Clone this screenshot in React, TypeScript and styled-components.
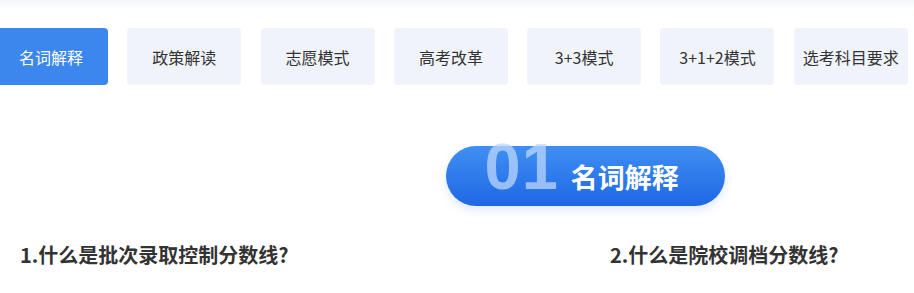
import styled, { createGlobalStyle } from "styled-components";

const GlobalStyle = createGlobalStyle`
  html, body {
    margin: 0;
    padding: 0;
    background: #fff;
    overflow: hidden;
  }
  body {
    font-family: "Microsoft YaHei", "Noto Sans CJK SC", "Liberation Sans", sans-serif;
    color: #333;
  }
`;

const Page = styled.div`
  width: 1200px;
  position: relative;
`;

const TopShade = styled.div`
  height: 10px;
  background: linear-gradient(180deg, #f3f6fa 0%, #ffffff 100%);
`;

const TabBar = styled.ul`
  list-style: none;
  margin: 18px 0 0 -6px;
  padding: 0;
  display: flex;
  gap: 19.3px;
`;

const Tab = styled.li<{ $active?: boolean }>`
  width: 114px;
  height: 57px;
  border-radius: 4px;
  background: ${(p) => (p.$active ? "#3b87ee" : "#f0f4fa")};
  color: ${(p) => (p.$active ? "#fff" : "#333")};
  font-size: 16px;
  display: grid;
  place-items: center;
  flex-shrink: 0;
  cursor: pointer;
`;

const BannerRow = styled.div`
  width: 1170px;
  display: flex;
  justify-content: center;
  margin-top: 61px;
`;

const Banner = styled.div`
  position: relative;
  width: 279px;
  height: 60px;
  border-radius: 30px;
  background: linear-gradient(180deg, #3f8ff2 0%, #1f67e5 100%);
  box-shadow: 0 4px 10px rgba(30, 100, 230, 0.15);
  display: flex;
  align-items: center;
  padding-left: 39px;
  box-sizing: border-box;
`;

const Num = styled.span`
  font-family: "Liberation Sans", Arial, sans-serif;
  font-weight: 700;
  font-size: 65px;
  line-height: 1;
  color: rgba(190, 215, 255, 0.75);
  margin-top: -20px;
  letter-spacing: 1px;
`;

const BannerTitle = styled.span`
  font-size: 27px;
  font-weight: 700;
  color: #fff;
  margin-left: 12px;
`;

const Columns = styled.div`
  display: grid;
  grid-template-columns: 570px 570px;
  column-gap: 20px;
  padding: 0 20px;
  margin-top: 36px;
`;

const Question = styled.h3`
  margin: 0;
  font-size: 20px;
  font-weight: 700;
  line-height: 26px;
  color: #333;
`;

const Answer = styled.p`
  margin: 19px 0 0;
  font-size: 14px;
  line-height: 26px;
  color: #666;
`;

const tabs = ["名词解释", "政策解读", "志愿模式", "高考改革", "3+3模式", "3+1+2模式", "选考科目要求"];

export default function App() {
  return (
    <Page>
      <GlobalStyle />
      <TopShade />
      <TabBar>
        {tabs.map((t, i) => (
          <Tab key={t} $active={i === 0}>
            {t}
          </Tab>
        ))}
      </TabBar>
      <BannerRow>
        <Banner>
          <Num>01</Num>
          <BannerTitle>名词解释</BannerTitle>
        </Banner>
      </BannerRow>
      <Columns>
        <div>
          <Question>1.什么是批次录取控制分数线?</Question>
          <Answer>
            批次录取控制分数线，简称批次线，是由省级招生考试机构根据当年考生成绩和招生计划确定的各批次最低录取控制分数线。
          </Answer>
        </div>
        <div>
          <Question>2.什么是院校调档分数线?</Question>
          <Answer>
            院校调档分数线，简称调档线，是指在投档过程中，按照考生志愿和院校招生计划确定的投档最低分数线。
          </Answer>
        </div>
      </Columns>
    </Page>
  );
}
